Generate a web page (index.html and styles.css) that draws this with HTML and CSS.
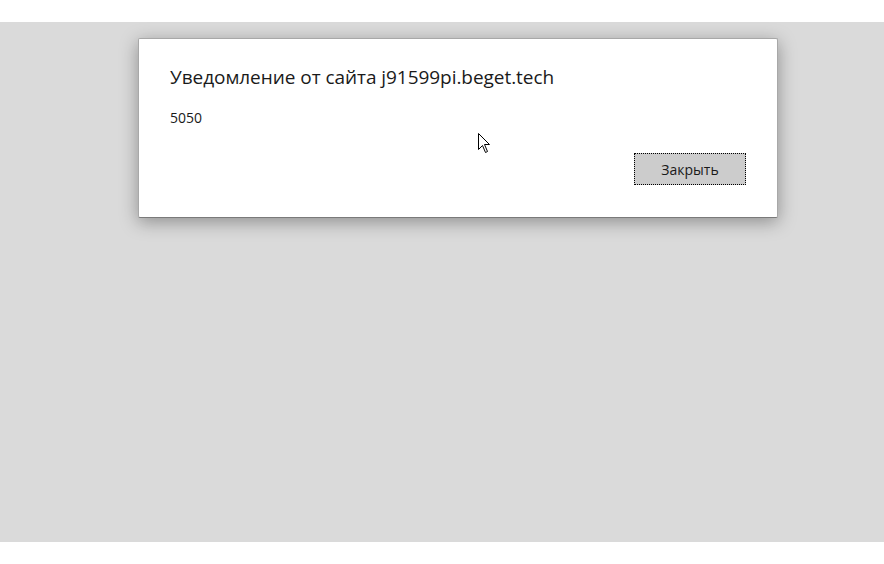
FILE: index.html
```html
<!DOCTYPE html>
<html lang="ru">
<head>
<meta charset="utf-8">
<title>Уведомление</title>
<link rel="stylesheet" href="styles.css">
</head>
<body>
<div class="top"></div>
<div class="overlay">
  <div class="dialog">
    <div class="title">Уведомление от сайта j91599pi.beget.tech</div>
    <div class="message">5050</div>
    <div class="actions">
      <button class="btn">Закрыть</button>
    </div>
  </div>
  <svg class="cursor" width="13" height="20" viewBox="0 0 13 20">
    <path d="M0.5 0.5 L0.5 16.5 L4.5 12.5 L7.5 19.5 L9.5 18.5 L6.5 11.5 L11.5 11.5 Z" fill="#fff" stroke="#000" stroke-width="1" stroke-linejoin="miter"/>
  </svg>
</div>
</body>
</html>
```
FILE: styles.css
```css
html, body {
  margin: 0;
  padding: 0;
  background: #ffffff;
  font-family: "Open Sans", "Noto Sans", sans-serif;
}
.top {
  height: 22px;
}
.overlay {
  position: relative;
  height: 520px;
  background: #dadada;
  padding-top: 16px;
  box-sizing: border-box;
}
.dialog {
  margin-left: 138px;
  width: 640px;
  height: 180px;
  box-sizing: border-box;
  background: #fff;
  border: 1px solid #a8a8a8;
  border-bottom-color: #7a7a7a;
  border-radius: 2px;
  box-shadow: 0 4px 18px rgba(0,0,0,0.35);
  padding: 25px 31px 0 31px;
  color: #1a1a1a;
}
.title {
  font-size: 19px;
  line-height: 26px;
  letter-spacing: -0.05px;
}
.message {
  margin-top: 19px;
  font-size: 14px;
  line-height: 18px;
}
.actions {
  display: flex;
  justify-content: flex-end;
  margin-top: 26px;
}
.btn {
  width: 112px;
  height: 32px;
  margin-right: 0;
  background: #cccccc;
  border: 1px dotted #000;
  font-family: inherit;
  font-size: 14px;
  color: #1a1a1a;
  padding: 0;
}
.cursor {
  position: absolute;
  left: 478px;
  top: 111px;
}
```
